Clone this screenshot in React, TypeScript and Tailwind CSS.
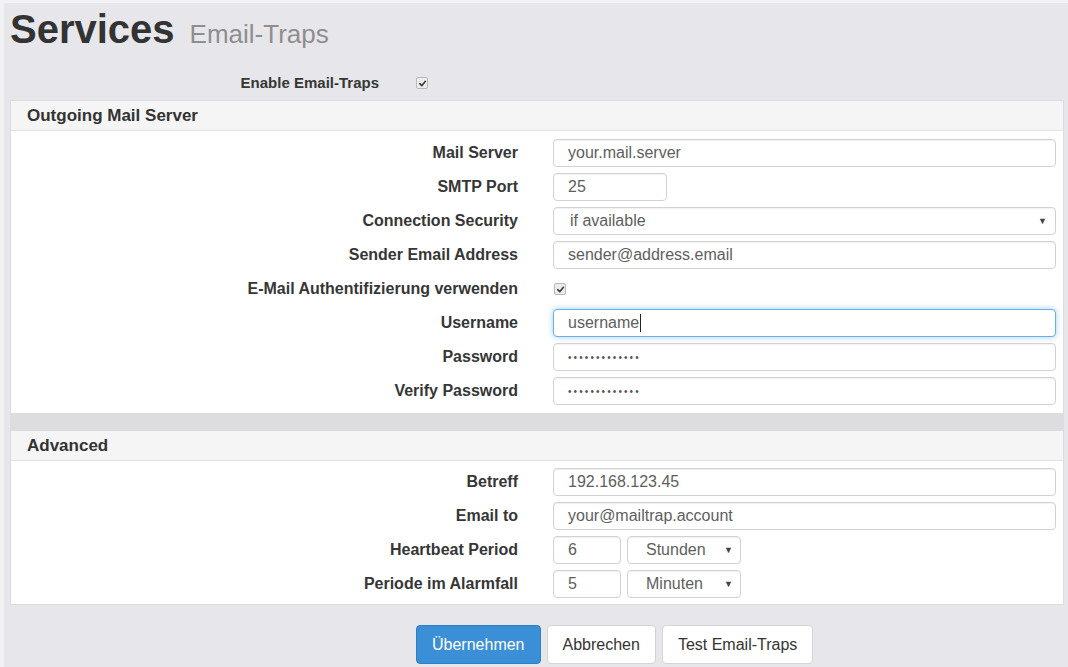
import React from "react";

const inputBase =
  "h-[28px] rounded-[4px] border border-[#d2d2d2] bg-white pl-[14px] flex items-center text-[16px] text-[#5e5e5e] shadow-[inset_0_1px_1px_rgba(0,0,0,0.06)]";

function Check() {
  return (
    <span className="inline-flex h-[12px] w-[12px] items-center justify-center rounded-[2px] border border-[#b9b9b9] bg-[#ececec]">
      <svg width="9" height="9" viewBox="0 0 10 10">
        <path d="M2 5.2 L4.2 7.4 L8.2 2.6" fill="none" stroke="#3a3a3a" strokeWidth="1.8" strokeLinecap="round" strokeLinejoin="round" />
      </svg>
    </span>
  );
}

function Caret() {
  return <span className="ml-[10px] text-[9px] leading-none text-[#444]">▼</span>;
}

function Row({ label, children }: { label: string; children: React.ReactNode }) {
  return (
    <div className="flex h-[28px] items-center">
      <div className="w-[507px] shrink-0 text-right text-[16px] font-bold text-[#363636]">{label}</div>
      <div className="ml-[35px] mr-[7px] flex flex-1 items-center">{children}</div>
    </div>
  );
}

function Dots() {
  return <span className="text-[10px] tracking-[2.1px] text-[#555]">•••••••••••••</span>;
}

export default function App() {
  return (
    <div className="h-[667px] w-[1068px] overflow-hidden border-l-[4px] border-t-[3px] border-[#f2f2f4] bg-[#e7e7eb] font-['Liberation_Sans',Arial,sans-serif] text-[#333]">
      {/* Title */}
      <div className="flex h-[59px] items-baseline gap-[15px] pl-[6px] pt-[6px]">
        <h1 className="text-[40px] font-bold leading-[40px] text-[#333]">Services</h1>
        <span className="text-[26px] leading-[40px] text-[#8e8e8e]">Email-Traps</span>
      </div>

      {/* Enable */}
      <div className="flex h-[38px] items-center pt-[4px]">
        <div className="w-[375px] text-right text-[15px] font-bold text-[#363636]">Enable Email-Traps</div>
        <div className="ml-[37px] flex">
          <Check />
        </div>
      </div>

      {/* Outgoing Mail Server */}
      <div className="ml-[6px] mr-[4px] border border-[#dcdcdc] bg-white">
        <div className="flex h-[30px] items-center border-b border-[#e2e2e2] bg-[#f5f5f5] px-[16px] text-[17px] font-bold">
          Outgoing Mail Server
        </div>
        <div className="flex flex-col gap-[6px] pb-[8px] pt-[8px]">
          <Row label="Mail Server">
            <div className={`${inputBase} w-full`}>your.mail.server</div>
          </Row>
          <Row label="SMTP Port">
            <div className={`${inputBase} w-[114px]`}>25</div>
          </Row>
          <Row label="Connection Security">
            <div className={`${inputBase} w-full justify-between pl-[16px] pr-[8px]`}>
              <span>if available</span>
              <Caret />
            </div>
          </Row>
          <Row label="Sender Email Address">
            <div className={`${inputBase} w-full`}>sender@address.email</div>
          </Row>
          <Row label="E-Mail Authentifizierung verwenden">
            <div className="ml-[1px] flex">
              <Check />
            </div>
          </Row>
          <Row label="Username">
            <div className="flex h-[28px] w-full items-center rounded-[4px] border border-[#66afe9] bg-white pl-[14px] text-[16px] text-[#5e5e5e] shadow-[0_0_6px_rgba(102,175,233,0.6)]">
              username
              <span className="ml-[1px] h-[18px] w-[1px] bg-[#222]" />
            </div>
          </Row>
          <Row label="Password">
            <div className={`${inputBase} w-full`}>
              <Dots />
            </div>
          </Row>
          <Row label="Verify Password">
            <div className={`${inputBase} w-full`}>
              <Dots />
            </div>
          </Row>
        </div>
      </div>

      <div className="ml-[6px] mr-[4px] h-[16px] bg-[#dddddf]" />

      {/* Advanced */}
      <div className="ml-[6px] mr-[4px] border border-[#dcdcdc] bg-white">
        <div className="flex h-[30px] items-center border-b border-[#e2e2e2] bg-[#f5f5f5] px-[16px] text-[17px] font-bold">
          Advanced
        </div>
        <div className="flex flex-col gap-[6px] pb-[6px] pt-[7px]">
          <Row label="Betreff">
            <div className={`${inputBase} w-full`}>192.168.123.45</div>
          </Row>
          <Row label="Email to">
            <div className={`${inputBase} w-full`}>your@mailtrap.account</div>
          </Row>
          <Row label="Heartbeat Period">
            <div className={`${inputBase} w-[68px]`}>6</div>
            <div className={`${inputBase} ml-[6px] w-[114px] pl-[18px]`}>
              <span className="w-[68px]">Stunden</span>
              <Caret />
            </div>
          </Row>
          <Row label="Periode im Alarmfall">
            <div className={`${inputBase} w-[68px]`}>5</div>
            <div className={`${inputBase} ml-[6px] w-[114px] pl-[18px]`}>
              <span className="w-[68px]">Minuten</span>
              <Caret />
            </div>
          </Row>
        </div>
      </div>

      {/* Footer buttons */}
      <div className="flex gap-[6px] pl-[412px] pt-[20px]">
        <button className="h-[39px] rounded-[4px] border border-[#2f7fc4] bg-[#3a8fd6] px-[15px] text-[16px] text-white">
          Übernehmen
        </button>
        <button className="h-[39px] rounded-[4px] border border-[#d4d4d4] bg-white px-[15px] text-[16px] text-[#333]">
          Abbrechen
        </button>
        <button className="h-[39px] rounded-[4px] border border-[#d4d4d4] bg-white px-[15px] text-[16px] text-[#333]">
          Test Email-Traps
        </button>
      </div>
    </div>
  );
}
